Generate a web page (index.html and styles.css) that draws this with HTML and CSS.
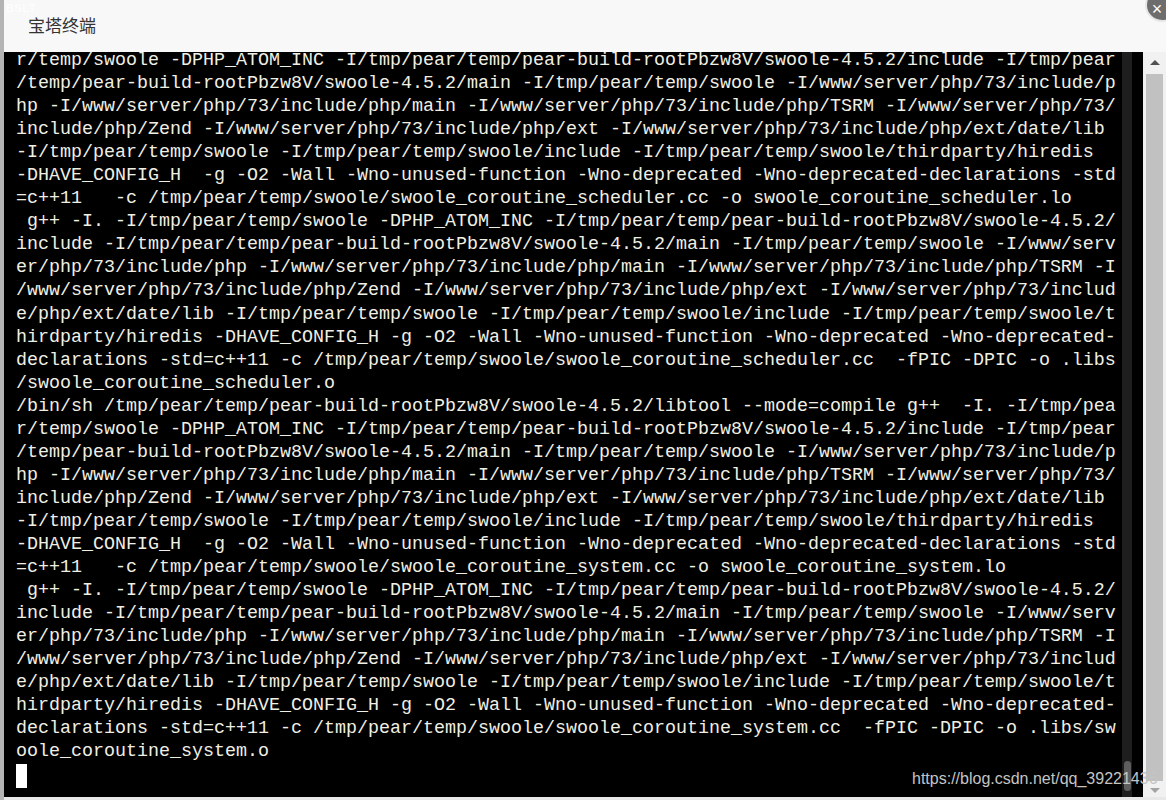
FILE: index.html
```html
<!DOCTYPE html>
<html lang="zh-CN">
<head>
<meta charset="utf-8">
<title>宝塔终端</title>
<link rel="stylesheet" href="styles.css">
</head>
<body>
<div class="page">
  <div class="backdrop-strip"></div>
  <div class="dialog">
    <div class="titlebar">
      <span class="title">宝塔终端</span>
    </div>
    <div class="body-row">
      <div class="terminal">
        <div class="screen">
          <div class="rows">
<div class="row">r/temp/swoole -DPHP_ATOM_INC -I/tmp/pear/temp/pear-build-rootPbzw8V/swoole-4.5.2/include -I/tmp/pear</div>
<div class="row">/temp/pear-build-rootPbzw8V/swoole-4.5.2/main -I/tmp/pear/temp/swoole -I/www/server/php/73/include/p</div>
<div class="row">hp -I/www/server/php/73/include/php/main -I/www/server/php/73/include/php/TSRM -I/www/server/php/73/</div>
<div class="row">include/php/Zend -I/www/server/php/73/include/php/ext -I/www/server/php/73/include/php/ext/date/lib</div>
<div class="row">-I/tmp/pear/temp/swoole -I/tmp/pear/temp/swoole/include -I/tmp/pear/temp/swoole/thirdparty/hiredis</div>
<div class="row">-DHAVE_CONFIG_H  -g -O2 -Wall -Wno-unused-function -Wno-deprecated -Wno-deprecated-declarations -std</div>
<div class="row">=c++11   -c /tmp/pear/temp/swoole/swoole_coroutine_scheduler.cc -o swoole_coroutine_scheduler.lo</div>
<div class="row"> g++ -I. -I/tmp/pear/temp/swoole -DPHP_ATOM_INC -I/tmp/pear/temp/pear-build-rootPbzw8V/swoole-4.5.2/</div>
<div class="row">include -I/tmp/pear/temp/pear-build-rootPbzw8V/swoole-4.5.2/main -I/tmp/pear/temp/swoole -I/www/serv</div>
<div class="row">er/php/73/include/php -I/www/server/php/73/include/php/main -I/www/server/php/73/include/php/TSRM -I</div>
<div class="row">/www/server/php/73/include/php/Zend -I/www/server/php/73/include/php/ext -I/www/server/php/73/includ</div>
<div class="row">e/php/ext/date/lib -I/tmp/pear/temp/swoole -I/tmp/pear/temp/swoole/include -I/tmp/pear/temp/swoole/t</div>
<div class="row">hirdparty/hiredis -DHAVE_CONFIG_H -g -O2 -Wall -Wno-unused-function -Wno-deprecated -Wno-deprecated-</div>
<div class="row">declarations -std=c++11 -c /tmp/pear/temp/swoole/swoole_coroutine_scheduler.cc  -fPIC -DPIC -o .libs</div>
<div class="row">/swoole_coroutine_scheduler.o</div>
<div class="row">/bin/sh /tmp/pear/temp/pear-build-rootPbzw8V/swoole-4.5.2/libtool --mode=compile g++  -I. -I/tmp/pea</div>
<div class="row">r/temp/swoole -DPHP_ATOM_INC -I/tmp/pear/temp/pear-build-rootPbzw8V/swoole-4.5.2/include -I/tmp/pear</div>
<div class="row">/temp/pear-build-rootPbzw8V/swoole-4.5.2/main -I/tmp/pear/temp/swoole -I/www/server/php/73/include/p</div>
<div class="row">hp -I/www/server/php/73/include/php/main -I/www/server/php/73/include/php/TSRM -I/www/server/php/73/</div>
<div class="row">include/php/Zend -I/www/server/php/73/include/php/ext -I/www/server/php/73/include/php/ext/date/lib</div>
<div class="row">-I/tmp/pear/temp/swoole -I/tmp/pear/temp/swoole/include -I/tmp/pear/temp/swoole/thirdparty/hiredis</div>
<div class="row">-DHAVE_CONFIG_H  -g -O2 -Wall -Wno-unused-function -Wno-deprecated -Wno-deprecated-declarations -std</div>
<div class="row">=c++11   -c /tmp/pear/temp/swoole/swoole_coroutine_system.cc -o swoole_coroutine_system.lo</div>
<div class="row"> g++ -I. -I/tmp/pear/temp/swoole -DPHP_ATOM_INC -I/tmp/pear/temp/pear-build-rootPbzw8V/swoole-4.5.2/</div>
<div class="row">include -I/tmp/pear/temp/pear-build-rootPbzw8V/swoole-4.5.2/main -I/tmp/pear/temp/swoole -I/www/serv</div>
<div class="row">er/php/73/include/php -I/www/server/php/73/include/php/main -I/www/server/php/73/include/php/TSRM -I</div>
<div class="row">/www/server/php/73/include/php/Zend -I/www/server/php/73/include/php/ext -I/www/server/php/73/includ</div>
<div class="row">e/php/ext/date/lib -I/tmp/pear/temp/swoole -I/tmp/pear/temp/swoole/include -I/tmp/pear/temp/swoole/t</div>
<div class="row">hirdparty/hiredis -DHAVE_CONFIG_H -g -O2 -Wall -Wno-unused-function -Wno-deprecated -Wno-deprecated-</div>
<div class="row">declarations -std=c++11 -c /tmp/pear/temp/swoole/swoole_coroutine_system.cc  -fPIC -DPIC -o .libs/sw</div>
<div class="row">oole_coroutine_system.o</div>
<div class="row"><span class="cursor"> </span></div>
          </div>
        </div>
        <div class="xterm-scroll"><div class="xterm-thumb"></div></div>
      </div>
      <div class="vscroll">
        <div class="arrow-up"></div>
        <div class="vthumb"></div>
        <div class="arrow-down"></div>
      </div>
    </div>
  </div>
  <span class="ghost">BSLT</span>
  <div class="watermark">https://blog.csdn.net/qq_39221436</div>
  <div class="close-btn"><span>×</span></div>
</div>
</body>
</html>
```

FILE: styles.css
```css
html, body {
  margin: 0;
  padding: 0;
  width: 1166px;
  height: 800px;
  overflow: hidden;
  background: #dcdcdc;
}

.page {
  position: relative;
  display: flex;
  width: 1166px;
  height: 800px;
}

.backdrop-strip {
  width: 4px;
  flex: none;
  background: #b4b4b4;
}

.dialog {
  flex: 1;
  display: flex;
  flex-direction: column;
  background: #f8f8f8;
  min-width: 0;
}

.titlebar {
  height: 52px;
  flex: none;
  display: flex;
  align-items: center;
  padding-left: 24px;
  background: #f8f8f8;
}

.title {
  font-family: "Noto Sans CJK SC", "Liberation Sans", sans-serif;
  font-size: 17px;
  line-height: 18px;
  color: #333;
  margin-top: -2px;
}

.ghost {
  position: absolute;
  left: 6px;
  top: 2px;
  font-family: "Liberation Sans", sans-serif;
  font-weight: bold;
  font-size: 11px;
  line-height: 12px;
  color: #ffffff;
  opacity: 0.8;
  letter-spacing: 0.5px;
}

.body-row {
  flex: 1;
  display: flex;
  min-height: 0;
  padding-bottom: 3px;
  background: #e8e8e8;
}

.terminal {
  flex: 1;
  display: flex;
  background: #000;
  min-width: 0;
  overflow: hidden;
}

.screen {
  flex: 1;
  overflow: hidden;
  padding-left: 12px;
}

.rows {
  margin-top: -3px;
  font-family: "Liberation Mono", "Courier New", monospace;
  font-size: 18.33px;
  line-height: 23.06px;
  color: #f0efe4;
}

.row {
  white-space: pre;
  height: 23.06px;
}

.cursor {
  display: inline-block;
  width: 11px;
  height: 24px;
  background: #ffffff;
  vertical-align: top;
  margin-top: 1px;
}

.xterm-scroll {
  width: 10px;
  flex: none;
  margin-right: 11px;
  background: #1e1e1e;
  display: flex;
  flex-direction: column;
  justify-content: flex-end;
  align-items: center;
  padding-bottom: 6px;
}

.xterm-thumb {
  width: 7px;
  height: 30px;
  border-radius: 4px;
  background: #5e5e5e;
}

.watermark {
  position: absolute;
  left: 912px;
  top: 770px;
  font-family: "Liberation Sans", Arial, sans-serif;
  font-size: 16px;
  line-height: 18px;
  color: #c4c4c4;
  white-space: nowrap;
}

.vscroll {
  width: 23px;
  flex: none;
  background: #f1f1f1;
  display: flex;
  flex-direction: column;
  align-items: center;
  padding-top: 8px;
  box-sizing: border-box;
}

.arrow-up {
  width: 0;
  height: 0;
  border-left: 5px solid transparent;
  border-right: 5px solid transparent;
  border-bottom: 5px solid #505050;
  margin-bottom: 9px;
}

.vthumb {
  width: 17px;
  flex: 1;
  background: #c1c1c1;
}

.arrow-down {
  width: 0;
  height: 0;
  border-left: 5px solid transparent;
  border-right: 5px solid transparent;
  border-top: 5px solid #a3a3a3;
  margin: 7px 0 4px;
}

.close-btn {
  position: absolute;
  right: -13px;
  top: -12px;
  width: 30px;
  height: 30px;
  border-radius: 50%;
  background: #6d6d6d;
  border: 2px solid #e6e6e6;
  display: flex;
  align-items: center;
  justify-content: center;
}

.close-btn span {
  font-family: "Liberation Sans", sans-serif;
  font-size: 18px;
  color: #fff;
  margin: 8px 10px 0 0;
}
```
